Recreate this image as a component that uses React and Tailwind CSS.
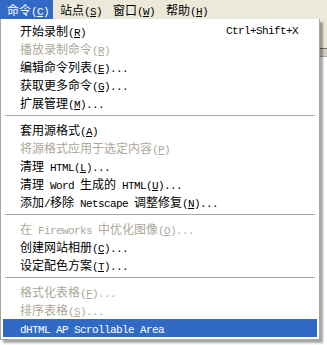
import React from 'react';

const MONO = "font-['Liberation_Mono',monospace] text-[11px] tracking-[-0.6px]";

const MENUBAR = ['命令(&C)', '站点(&S)', '窗口(&W)', '帮助(&H)'];

const ITEMS = [
  { t: '开始录制(&R)', k: 'Ctrl+Shift+X' },
  { t: '播放录制命令(&R)', off: true },
  { t: '编辑命令列表(&E)...' },
  { t: '获取更多命令(&G)...' },
  { t: '扩展管理(&M)...' },
  { sep: true },
  { t: '套用源格式(&A)' },
  { t: '将源格式应用于选定内容(&P)', off: true },
  { t: '清理 HTML(&L)...' },
  { t: '清理 Word 生成的 HTML(&U)...' },
  { t: '添加/移除 Netscape 调整修复(&N)...' },
  { sep: true },
  { t: '在 Fireworks 中优化图像(&O)...', off: true },
  { t: '创建网站相册(&C)...' },
  { t: '设定配色方案(&T)...' },
  { sep: true },
  { t: '格式化表格(&F)...', off: true },
  { t: '排序表格(&S)...', off: true },
  { t: 'dHTML AP Scrollable Area', on: true },
];

// split label into CJK / ascii runs, "&X" marks the underlined mnemonic
function Label({ text }) {
  const out = [];
  text.split(/(&.)/).forEach((chunk, i) => {
    if (!chunk) return;
    if (chunk[0] === '&' && chunk.length === 2) {
      out.push(<span key={i} className={MONO + ' underline underline-offset-1'}>{chunk[1]}</span>);
      return;
    }
    chunk.split(/([\x20-\x7e]+)/).forEach((run, j) => {
      if (!run) return;
      if (/^[\x20-\x7e]+$/.test(run)) out.push(<span key={i + '-' + j} className={MONO}>{run}</span>);
      else out.push(<span key={i + '-' + j}>{run}</span>);
    });
  });
  return <>{out}</>;
}

export default function App() {
  return (
    <div className="relative w-[327px] h-[345px] overflow-hidden bg-white font-['Noto_Sans_CJK_SC',sans-serif] text-[12px] text-black whitespace-pre">
      <div className="flex h-[19px] bg-[#ECE9D8]">
        {MENUBAR.map((m, i) => (
          <div key={m} className={'w-[53px] pl-[7px] leading-[19px] ' + (i === 0 ? 'bg-[#316AC5] text-white' : '')}>
            <Label text={m} />
          </div>
        ))}
      </div>
      {/* window content peeking out behind the menu */}
      <div className="h-[30px] bg-[#ECE9D8] border-b border-[#716F64]" />
      <div className="h-[8px] bg-[#D4D0C8] border-b border-[#ACA899]" />

      <div className="absolute left-0 top-[19px] w-[320px] bg-white border-x border-b border-[#ACA899] pt-[3px] pb-[2px] px-[2px] shadow-[3px_3px_2px_rgba(0,0,0,0.35)]">
        {ITEMS.map((it, i) =>
          it.sep ? (
            <div key={i} className="h-[9px] pt-[3px] px-[2px]">
              <div className="h-px bg-[#ACA899]" />
            </div>
          ) : (
            <div
              key={i}
              className={
                'flex justify-between h-[18px] leading-[18px] pl-[17px] pr-[19px] ' +
                (it.on ? 'bg-[#316AC5] text-white' : it.off ? 'text-[#ACA899]' : '')
              }
            >
              <span><Label text={it.t} /></span>
              {it.k && <span className={MONO}>{it.k}</span>}
            </div>
          )
        )}
      </div>
    </div>
  );
}
